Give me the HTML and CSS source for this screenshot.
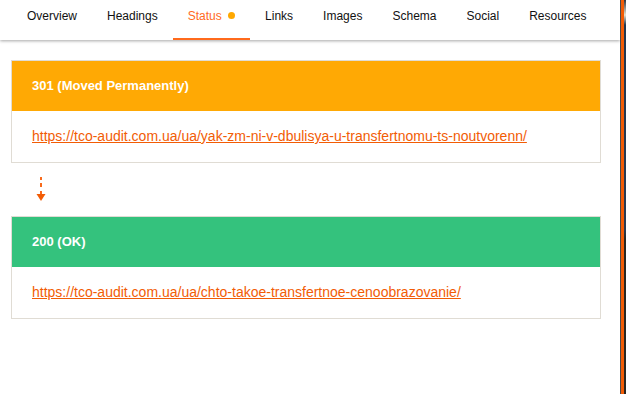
FILE: index.html
```html
<!doctype html>
<html>
<head>
<meta charset="utf-8">
<title>Status</title>
<link rel="stylesheet" href="styles.css">
</head>
<body>
	<div class="wrap">
		<div class="main">
			<ul class="tabs">
				<li>Overview</li>
				<li>Headings</li>
				<li class="on">Status <span class="dot"></span></li>
				<li>Links</li>
				<li>Images</li>
				<li>Schema</li>
				<li>Social</li>
				<li>Resources</li>
			</ul>

			<div class="chain">
				<div class="card">
					<div class="head warn">301 (Moved Permanently)</div>
					<div class="body"><a href="#">https://tco-audit.com.ua/ua/yak-zm-ni-v-dbulisya-u-transfertnomu-ts-noutvorenn/</a></div>
				</div>

				<div class="arrow">
					<svg width="12" height="28" viewBox="0 0 12 28">
						<rect x="5" y="3" width="2" height="3" fill="#f86a1c"/>
						<rect x="5" y="9" width="2" height="4" fill="#f86a1c"/>
						<rect x="5" y="17" width="2" height="3" fill="#f86a1c"/>
						<polygon points="1.5,20 10.5,20 6,27" fill="#f25c05"/>
					</svg>
				</div>

				<div class="card">
					<div class="head ok">200 (OK)</div>
					<div class="body"><a href="#">https://tco-audit.com.ua/ua/chto-takoe-transfertnoe-cenoobrazovanie/</a></div>
				</div>
			</div>
		</div>
		<div class="edge">
			<div class="line"></div>
			<div class="bar"></div>
			<div class="back"></div>
		</div>
	</div>
</body>
</html>
```

FILE: styles.css
```css
body,*{
	padding:0px;
	margin:0px;
	font-family:"Liberation Sans", Arial, sans-serif;
}

body{
	background:#fff;
}

.wrap{
	display:flex;
	height:394px;
}

.main{
	width:620px;
}

.tabs{
	display:flex;
	list-style-type:none;
	height:40px;
	padding-left:12px;
	box-shadow:0 1px 3px rgba(0,0,0,.35);
	background:#fff;
}

.tabs li{
	padding:9px 15px 0 15px;
	font-size:12px;
	line-height:14px;
	color:#111;
	box-sizing:border-box;
	height:40px;
	border-bottom:2px solid transparent;
}

.tabs .on{
	color:#ff6a1c;
	border-bottom-color:#ff6a1c;
}

.dot{
	display:inline-block;
	width:7px;
	height:7px;
	border-radius:50%;
	background:#ffa800;
	margin-left:3px;
	vertical-align:1px;
}

.chain{
	padding:20px 19px 0 11px;
}

.card{
	border:1px solid #e0dcd4;
}

.head{
	height:50px;
	line-height:50px;
	padding-left:20px;
	color:#fff;
	font-size:13px;
	font-weight:bold;
}

.warn{
	background:#ffa904;
}

.ok{
	background:#34c27d;
}

.body{
	height:51px;
	line-height:50px;
	padding-left:20px;
	font-size:14px;
}

.body a{
	color:#f25c05;
}

.arrow{
	height:53px;
	padding:11px 0 0 24px;
	box-sizing:border-box;
}

.arrow svg{
	display:block;
}

.edge{
	display:flex;
	width:6px;
}

.edge .line{
	width:1px;
	background:#4a4a4a;
}

.edge .bar{
	width:3px;
	background:#f25c05;
}

.edge .back{
	width:2px;
	background:linear-gradient(#2e3440 0, #e8e2d0 15px, #22364f 25px, #2a3a52 230px, #2b2620 240px, #2b2620 394px);
}
```
